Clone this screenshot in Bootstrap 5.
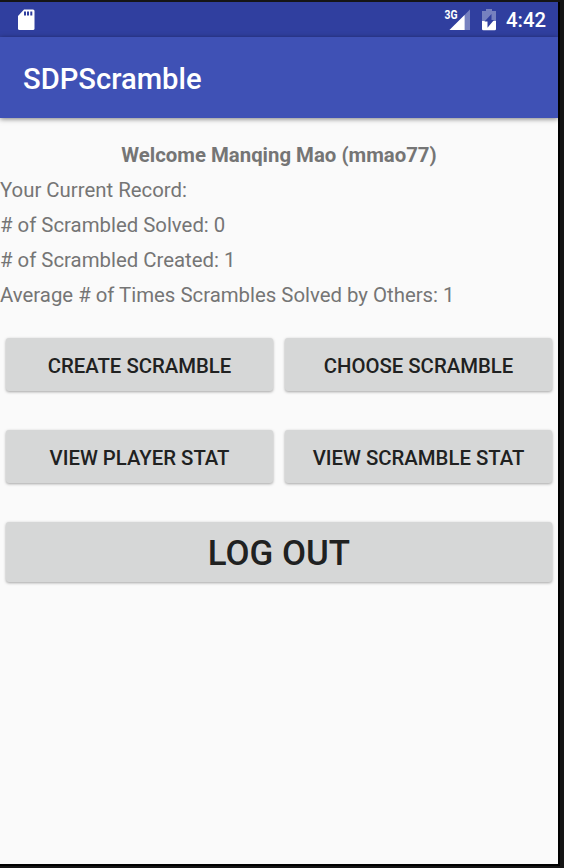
<!DOCTYPE html>
<html lang="en">
<head>
<meta charset="utf-8">
<meta name="viewport" content="width=device-width, initial-scale=1">
<title>SDPScramble</title>
<link rel="stylesheet" href="https://cdn.jsdelivr.net/npm/bootstrap@5.3.0/dist/css/bootstrap.min.css">
<style>
body{background:#151515;font-family:Roboto,sans-serif;font-size:20.34px;color:#757575;height:868px;overflow:hidden;padding-top:2px}
.device{width:558px;height:862px;background:#fafafa;box-shadow:0 0 0 2px #000;clip-path:inset(0 -2px -4px 0)}
.statusbar{height:35px;background:#303f9f;color:#fff;padding:0 12px 0 17px}
.clock{font-weight:500;line-height:35px;margin-left:8px;padding-top:2px}
.battery{margin-left:9px}
.appbar{height:81px;background:#3f51b5;padding:3px 23px 0;box-shadow:0 1px 5px rgba(0,0,0,.5)}
.appbar h1{font-size:29.16px;font-weight:500;color:#fff;line-height:34px}
.record{padding-top:20px}
.record p{line-height:35px;font-size:20.38px}
.actions{padding:25px 6px 0;row-gap:39px}
.raised{--bs-btn-color:#202121;--bs-btn-bg:#d6d7d7;--bs-btn-border-width:0;--bs-btn-hover-bg:#cccdcd;--bs-btn-hover-color:#202121;--bs-btn-padding-y:0;--bs-btn-padding-x:0;--bs-btn-border-radius:3px;--bs-btn-font-size:20.34px;--bs-btn-font-weight:500;height:53px;line-height:56px;box-shadow:0 1px 3px rgba(0,0,0,.35)}
.btn-row{gap:12px}
.logout{--bs-btn-font-size:34.88px;height:60px;line-height:63px}
</style>
<script src="https://cdn.jsdelivr.net/npm/bootstrap@5.3.0/dist/js/bootstrap.bundle.min.js"></script>
</head>
<body>
<main class="device">
  <div class="statusbar d-flex align-items-center">
    <svg class="me-auto" width="18" height="22" viewBox="0 0 18 22"><path fill="#fff" d="M7 0.500H16Q17.500.500 17.500 2V19.500Q17.500 21 16 21H2.500Q1 21 1 19.500V7Z"/><path fill="#303f9f" d="M7 2.500h2v4H7zM10 2.500h2v4h-2zM13.300 2.500h2v4h-2z"/></svg>
    <svg width="27" height="32" viewBox="0 -5 27 32"><path fill="#7681bf" d="M26 .5V21H5.500Z"/><path fill="#fff" d="M20.600 5.900V21H5.500Z"/><text x=".5" y="9.500" fill="#fff" stroke="#303f9f" stroke-width="1" paint-order="stroke" font-size="12.500" font-weight="700" textLength="13" lengthAdjust="spacingAndGlyphs">3G</text></svg>
    <svg class="battery" width="18" height="22" viewBox="0 0 18 22"><path fill="#7681bf" d="M6 0h6v2h4v10H2V2h4z"/><path fill="#fff" d="M2 12h14v8q0 1.300-1.300 1.300H3.300Q2 21.300 2 20z"/><path fill="#303f9f" d="M11.500 5v6.100h2.500L7.500 18.700v-6.100H4.500z"/></svg>
    <span class="clock">4:42</span>
  </div>
  <header class="appbar d-flex align-items-center"><h1 class="m-0">SDPScramble</h1></header>
  <section class="record">
    <p class="m-0 text-center fw-bold">Welcome Manqing Mao (mmao77)</p>
    <p class="m-0">Your Current Record:</p>
    <p class="m-0"># of Scrambled Solved: 0</p>
    <p class="m-0"># of Scrambled Created: 1</p>
    <p class="m-0">Average # of Times Scrambles Solved by Others: 1</p>
  </section>
  <section class="actions d-flex flex-column">
    <div class="btn-row d-flex">
      <button type="button" class="btn raised w-50 text-uppercase">Create Scramble</button>
      <button type="button" class="btn raised w-50 text-uppercase">Choose Scramble</button>
    </div>
    <div class="btn-row d-flex">
      <button type="button" class="btn raised w-50 text-uppercase">View Player Stat</button>
      <button type="button" class="btn raised w-50 text-uppercase">View Scramble Stat</button>
    </div>
    <button type="button" class="btn raised logout w-100 text-uppercase">Log out</button>
  </section>
</main>
</body>
</html>
